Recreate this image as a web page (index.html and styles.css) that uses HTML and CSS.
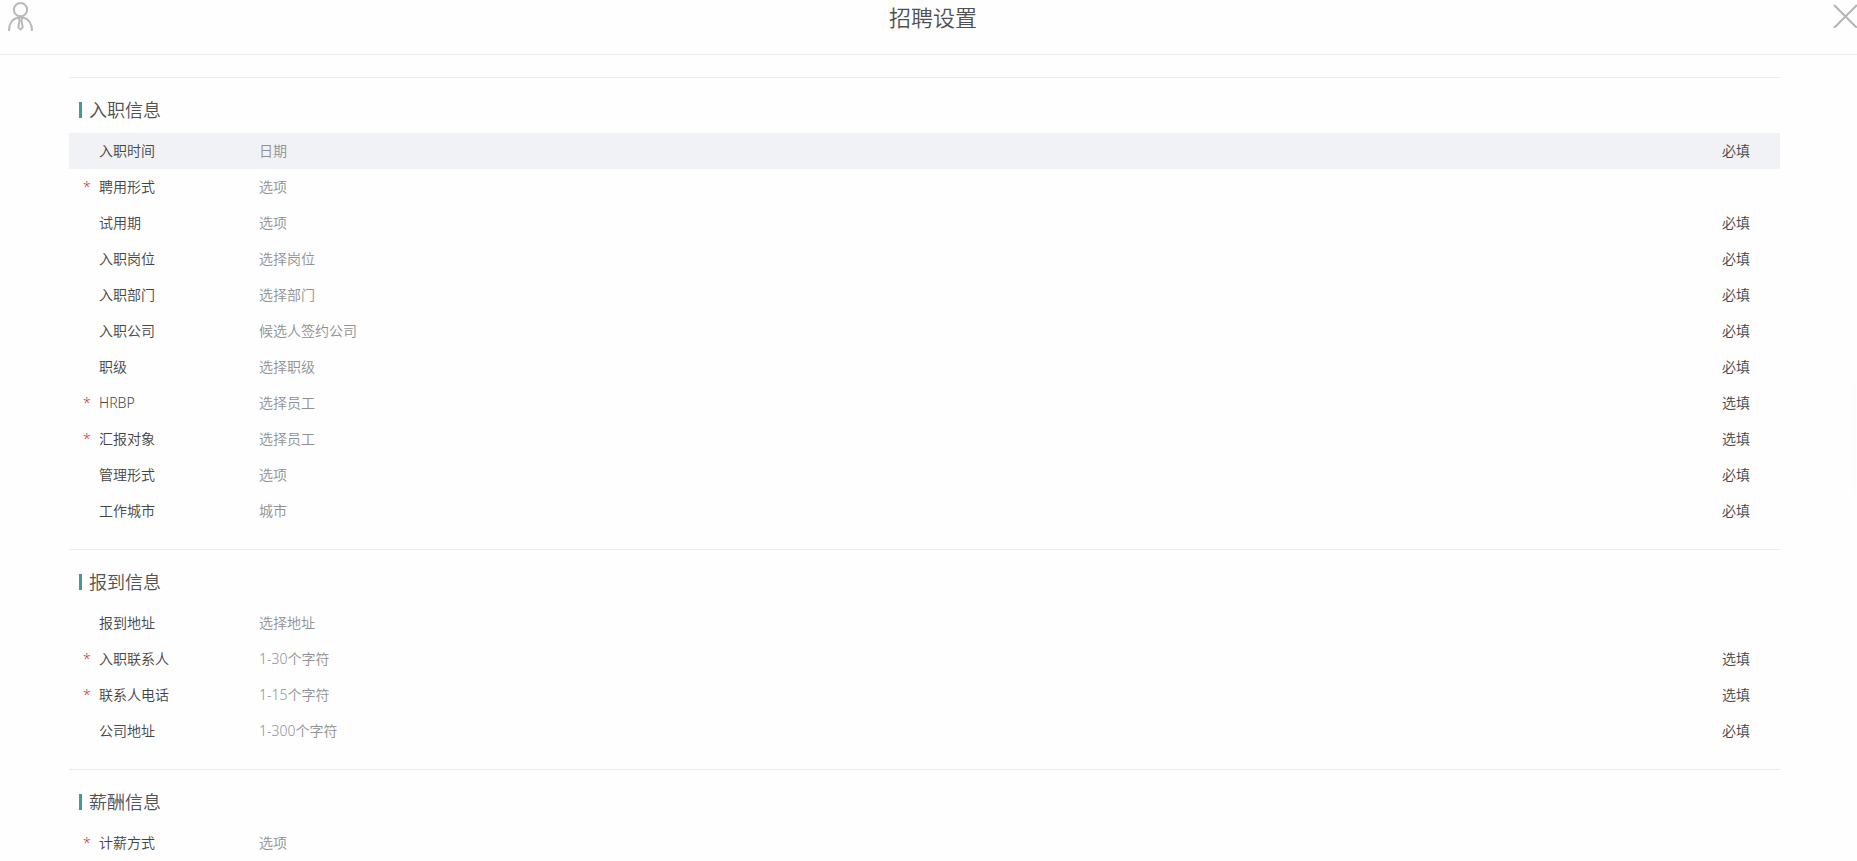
FILE: index.html
```html
<!DOCTYPE html>
<html lang="zh-CN">
<head>
<meta charset="utf-8">
<meta name="viewport" content="width=device-width, initial-scale=1">
<title>招聘设置</title>
<link rel="stylesheet" href="styles.css">
</head>
<body>
<header class="topbar">
  <svg class="user-icon" viewBox="0 0 25 31" aria-hidden="true">
    <circle cx="12.5" cy="9.7" r="6.6"/>
    <path d="M1 31C1 24 4 19 10 17.500H15C21 19 24 24 24 31M10.500 17.500L11.500 20.500L10.300 27.500L12.500 29.500L14.700 27.500L13.500 20.500L14.500 17.500"/>
  </svg>
  <h1 class="topbar-title">招聘设置</h1>
  <button class="close" type="button" aria-label="关闭">
    <svg class="close-icon" viewBox="0 0 24 24" aria-hidden="true"><path d="M1 1L24 24M24 1L1 24"/></svg>
  </button>
</header>
<main class="content">
  <section class="section">
    <h2 class="section-title">入职信息</h2>
    <table class="fields">
      <tr class="row row-active"><th class="name" scope="row"><span class="star"></span>入职时间</th><td class="kind">日期</td><td class="rule">必填</td></tr>
      <tr class="row"><th class="name" scope="row"><span class="star">*</span>聘用形式</th><td class="kind">选项</td><td class="rule"></td></tr>
      <tr class="row"><th class="name" scope="row"><span class="star"></span>试用期</th><td class="kind">选项</td><td class="rule">必填</td></tr>
      <tr class="row"><th class="name" scope="row"><span class="star"></span>入职岗位</th><td class="kind">选择岗位</td><td class="rule">必填</td></tr>
      <tr class="row"><th class="name" scope="row"><span class="star"></span>入职部门</th><td class="kind">选择部门</td><td class="rule">必填</td></tr>
      <tr class="row"><th class="name" scope="row"><span class="star"></span>入职公司</th><td class="kind">候选人签约公司</td><td class="rule">必填</td></tr>
      <tr class="row"><th class="name" scope="row"><span class="star"></span>职级</th><td class="kind">选择职级</td><td class="rule">必填</td></tr>
      <tr class="row"><th class="name" scope="row"><span class="star">*</span>HRBP</th><td class="kind">选择员工</td><td class="rule">选填</td></tr>
      <tr class="row"><th class="name" scope="row"><span class="star">*</span>汇报对象</th><td class="kind">选择员工</td><td class="rule">选填</td></tr>
      <tr class="row"><th class="name" scope="row"><span class="star"></span>管理形式</th><td class="kind">选项</td><td class="rule">必填</td></tr>
      <tr class="row"><th class="name" scope="row"><span class="star"></span>工作城市</th><td class="kind">城市</td><td class="rule">必填</td></tr>
    </table>
  </section>
  <section class="section">
    <h2 class="section-title">报到信息</h2>
    <table class="fields">
      <tr class="row"><th class="name" scope="row"><span class="star"></span>报到地址</th><td class="kind">选择地址</td><td class="rule"></td></tr>
      <tr class="row"><th class="name" scope="row"><span class="star">*</span>入职联系人</th><td class="kind">1-30个字符</td><td class="rule">选填</td></tr>
      <tr class="row"><th class="name" scope="row"><span class="star">*</span>联系人电话</th><td class="kind">1-15个字符</td><td class="rule">选填</td></tr>
      <tr class="row"><th class="name" scope="row"><span class="star"></span>公司地址</th><td class="kind">1-300个字符</td><td class="rule">必填</td></tr>
    </table>
  </section>
  <section class="section">
    <h2 class="section-title">薪酬信息</h2>
    <table class="fields">
      <tr class="row"><th class="name" scope="row"><span class="star">*</span>计薪方式</th><td class="kind">选项</td><td class="rule"></td></tr>
    </table>
  </section>
</main>
<div class="edge-shadow"></div>
</body>
</html>
```
FILE: styles.css
```css
* {
  box-sizing: border-box;
}

body {
  margin: 0;
  overflow: hidden;
  background: #fefefe;
  color: #444;
  font: 350 14px/20px "Noto Sans", "Noto Sans CJK SC", sans-serif;
}

.topbar {
  display: flex;
  align-items: flex-start;
  height: 55px;
  padding-left: 8px;
  border-bottom: 1px solid #ebebeb;
}

.user-icon {
  width: 25px;
  height: 31px;
  fill: none;
  stroke: #b9b9bb;
  stroke-width: 2;
}

.topbar-title {
  flex: 1;
  margin: 0;
  padding-top: 2px;
  color: #505050;
  font-size: 22px;
  font-weight: 350;
  line-height: 30px;
  text-align: center;
}

.close {
  padding: 4px 0 0;
  border: 0;
  background: none;
  cursor: pointer;
}

.close-icon {
  display: block;
  width: 24px;
  height: 24px;
  fill: none;
  stroke: #b4b4b4;
  stroke-width: 2;
}

.content {
  padding: 22px 77px 0 69px;
}

.section {
  padding-bottom: 20px;
  border-top: 1px solid #ebebeb;
}

.section-title {
  display: flex;
  align-items: center;
  gap: 7px;
  height: 55px;
  margin: 0;
  padding: 8px 10px 0;
  color: #505050;
  font-size: 18px;
  font-weight: 350;
}

.section-title::before {
  width: 3px;
  height: 16px;
  background: #419b92;
  content: "";
}

.fields {
  width: 100%;
  border-collapse: collapse;
  table-layout: fixed;
}

.row {
  height: 36px;
}

.row-active {
  background: #f1f2f6;
}

.name,
.kind,
.rule {
  padding: 0;
  font-weight: 350;
  text-align: left;
}

.name {
  width: 190px;
  padding-left: 14px;
}

.star {
  display: inline-block;
  width: 16px;
  color: #b93a34;
}

.kind {
  color: #909090;
}

.rule {
  width: 120px;
  padding-right: 30px;
  text-align: right;
}

.edge-shadow {
  position: absolute;
  top: 50%;
  right: 0;
  width: 1px;
  height: 110px;
  transform: translateY(-45%);
  box-shadow: 0 0 6px rgba(0, 0, 0, 0.1);
}
```
